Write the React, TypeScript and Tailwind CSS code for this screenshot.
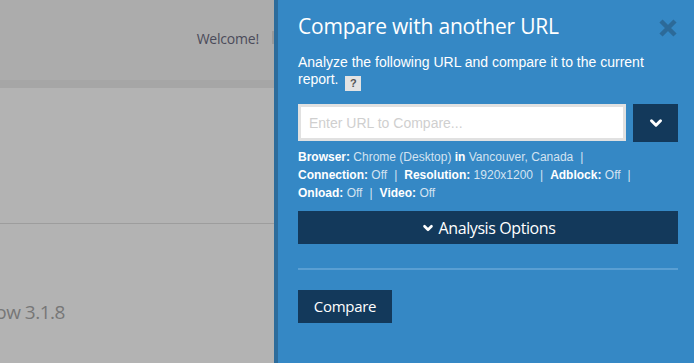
import { ChevronDown } from 'lucide-react'

function Info({ label, value, last }: { label: string; value: string; last?: boolean }) {
  return (
    <span className="whitespace-nowrap">
      <b className="text-white">{label}</b> <span className="text-[#d3e3f1]">{value}</span>
      {!last && <span className="text-[#d3e3f1] mx-[7px]">|</span>}
    </span>
  )
}

export default function App() {
  return (
    <div className="w-[694px] h-[363px] flex overflow-hidden font-['Liberation_Sans',Arial,sans-serif]">
      {/* Dimmed page behind the panel */}
      <div className="w-[274px] flex flex-col bg-[#b3b3b3] overflow-hidden">
        <div className="h-[80px] bg-[#acacac] flex items-start justify-end pt-[28px]">
          <span className="font-['Open_Sans',sans-serif] text-[14px] text-[#4b4b5a] tracking-[-0.2px]">Welcome!</span>
          <span className="ml-[13px] mt-[3px] w-[2px] h-[13px] bg-[#9a9a9a]" />
        </div>
        <div className="h-[8px] bg-[#a6a6a6]" />
        <div className="h-[136px] border-b border-[#9d9d9d]" />
        <div className="pt-[74px] -ml-[37px] whitespace-nowrap font-['Open_Sans',sans-serif] text-[19px] text-[#777] tracking-[-0.5px]">Hellow 3.1.8</div>
      </div>

      {/* Compare panel */}
      <div className="w-[420px] bg-[#3588c5] border-l-4 border-[#2d6c9b] pl-[20px] pr-[16px] pt-[12px] text-white">
        <div className="flex items-start justify-between">
          <h2 className="font-['Open_Sans',sans-serif] text-[21px] leading-[29px] tracking-[-0.2px]">Compare with another URL</h2>
          <svg width="20" height="20" viewBox="0 0 20 20" className="mt-[6px]">
            <path d="M3 3 L17 17 M17 3 L3 17" stroke="#2c6a99" strokeWidth="4.5" strokeLinecap="butt" />
          </svg>
        </div>

        <p className="mt-[13px] text-[14px] leading-[17px] pr-[20px]">
          Analyze the following URL and compare it to the current report.
          <span className="inline-flex items-center justify-center ml-[7px] w-[16px] h-[15px] bg-[#e3e3e3] text-[#555] text-[11px] font-bold align-[-3px]">?</span>
        </p>

        <div className="mt-[13px] flex gap-[7px]">
          <input
            placeholder="Enter URL to Compare..."
            className="w-[328px] h-[37px] border-[3px] border-[#e1e1e1] bg-white px-[8px] text-[14px] text-[#333] placeholder:text-[#cfcfcf] outline-none"
          />
          <button className="w-[45px] h-[38px] bg-[#13395b] flex items-center justify-center">
            <ChevronDown size={18} strokeWidth={4} color="white" />
          </button>
        </div>

        <div className="mt-[6px] text-[12px] leading-[18px]">
          <div>
            <b>Browser:</b> <span className="text-[#d3e3f1]">Chrome (Desktop)</span> <b>in</b>{' '}
            <span className="text-[#d3e3f1]">Vancouver, Canada</span>
            <span className="text-[#d3e3f1] mx-[7px]">|</span>
          </div>
          <div>
            <Info label="Connection:" value="Off" />
            <Info label="Resolution:" value="1920x1200" />
            <Info label="Adblock:" value="Off" />
          </div>
          <div>
            <Info label="Onload:" value="Off" />
            <Info label="Video:" value="Off" last />
          </div>
        </div>

        <button className="mt-[9px] w-full h-[33px] bg-[#13395b] flex items-center justify-center gap-[4px] font-['Open_Sans',sans-serif] text-[16px] tracking-[-0.4px]">
          <ChevronDown size={14} strokeWidth={4.5} />
          Analysis Options
        </button>

        <div className="mt-[24px] h-[2px] bg-[#5a9fd3]" />

        <button className="mt-[20px] w-[94px] h-[33px] bg-[#13395b] font-['Open_Sans',sans-serif] text-[15px] tracking-[-0.3px]">
          Compare
        </button>
      </div>
    </div>
  )
}
